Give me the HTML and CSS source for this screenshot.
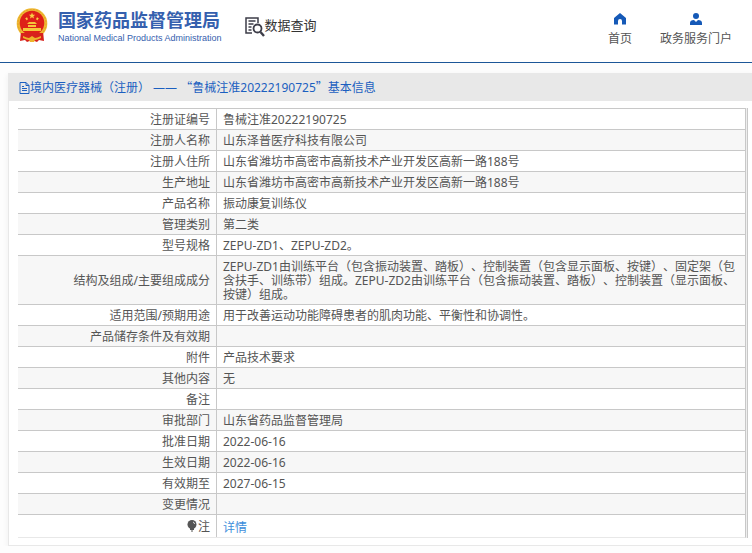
FILE: index.html
```html
<!DOCTYPE html>
<html lang="zh-CN">
<head>
<meta charset="utf-8">
<title>国家药品监督管理局 数据查询</title>
<link rel="stylesheet" href="styles.css">
</head>
<body>
<header class="site-header">
  <a class="brand" href="#">
    <svg class="emblem" viewBox="0 0 32 36" aria-hidden="true">
      <path d="M5 23 L4 33 L9 32 L11 34 L16 32 L21 34 L23 32 L28 33 L27 23Z" fill="#d8221c"/>
      <circle cx="16" cy="15.500" r="15.300" fill="#f0ba32"/>
      <circle cx="16" cy="15.500" r="14" fill="none" stroke="#e0a02a" stroke-width="1" stroke-dasharray="2 1.500"/>
      <circle cx="16" cy="15" r="12.300" fill="#de2018"/>
      <path d="M16 4.500l.9 2.200 2.300.1-1.800 1.500.6 2.300-2-1.300-2 1.300.6-2.300-1.800-1.500 2.300-.1z" fill="#f9d044"/>
      <path d="M10 9l.9 1 1.200-.3-.7 1.100.7 1.100-1.200-.3-.9 1v-1.300l-1.200-.5 1.200-.5zM22 9v1.300l1.200.5-1.200.5v1.300l-.9-1-1.200.3.7-1.100-.7-1.100 1.200.3z" fill="#f9d044"/>
      <path d="M11 16l2-2h6l2 2zM12 17h8v2h-8zM7 20h18v3H7z" fill="#f5c63a"/>
      <path d="M5 25h22v3q-11 5-22 0z" fill="#d8221c"/>
      <path d="M7 28q4 2 6 2l3-2 3 2q2 0 6-2v2q-4 2-6 2l-1 2h-4l-1-2q-2 0-6-2z" fill="#edb52b"/>
    </svg>
    <span class="brand-text">
      <span class="brand-cn">国家药品监督管理局</span>
      <span class="brand-en">National Medical Products Administration</span>
    </span>
  </a>
  <div class="section-name">
    <svg class="search-icon" viewBox="0 0 20 20" fill="none" stroke="#3d3d48" aria-hidden="true">
      <path d="M13 6V1H1v15h6" stroke-width="1.500"/>
      <path d="M3.500 4h7M3.500 7h5M3.500 10h3M3.500 13h3" stroke-width="1.300"/>
      <circle cx="12.500" cy="11.500" r="4" stroke-width="1.800"/>
      <path d="M15.500 15l3.500 4" stroke-width="2.400"/>
    </svg>
    <span>数据查询</span>
  </div>
  <nav class="site-nav">
    <a href="#">
      <svg viewBox="0 0 12 12" aria-hidden="true"><path d="M6 0L0 5v6.500h4V8q0-2 2-2t2 2v3.500h4V5z" fill="#1559b7"/></svg>
      <span>首页</span>
    </a>
    <a href="#">
      <svg viewBox="0 0 12 12" aria-hidden="true"><circle cx="6" cy="3" r="3" fill="#1559b7"/><path d="M0 12V10q0-3 4-3l2 2 2-2q4 0 4 3v2z" fill="#1559b7"/></svg>
      <span>政务服务门户</span>
    </a>
  </nav>
</header>
<main class="panel">
  <h1 class="panel-title">
    <svg viewBox="0 0 11 12" fill="none" stroke="#1b5fc0" aria-hidden="true"><path d="M1 .5h6l3 3v8H1zM7 .5v3h3M3 4.500h2M3 6.500h5M3 8.500h5"/></svg>
    <span>境内医疗器械（注册） —— <span class="quote">“</span>鲁械注准20222190725<span class="quote">”</span>基本信息</span>
  </h1>
  <div class="table-wrap">
    <table class="record">
      <tbody>
        <tr><th scope="row">注册证编号</th><td>鲁械注准20222190725</td></tr>
        <tr><th scope="row">注册人名称</th><td>山东泽普医疗科技有限公司</td></tr>
        <tr><th scope="row">注册人住所</th><td>山东省潍坊市高密市高新技术产业开发区高新一路188号</td></tr>
        <tr><th scope="row">生产地址</th><td>山东省潍坊市高密市高新技术产业开发区高新一路188号</td></tr>
        <tr><th scope="row">产品名称</th><td>振动康复训练仪</td></tr>
        <tr><th scope="row">管理类别</th><td>第二类</td></tr>
        <tr><th scope="row">型号规格</th><td>ZEPU-ZD1、ZEPU-ZD2。</td></tr>
        <tr><th scope="row">结构及组成/主要组成成分</th><td>ZEPU-ZD1由训练平台（包含振动装置、踏板）、控制装置（包含显示面板、按键）、固定架（包含扶手、训练带）组成。ZEPU-ZD2由训练平台（包含振动装置、踏板）、控制装置（显示面板、按键）组成。</td></tr>
        <tr><th scope="row">适用范围/预期用途</th><td>用于改善运动功能障碍患者的肌肉功能、平衡性和协调性。</td></tr>
        <tr><th scope="row">产品储存条件及有效期</th><td></td></tr>
        <tr><th scope="row">附件</th><td>产品技术要求</td></tr>
        <tr><th scope="row">其他内容</th><td>无</td></tr>
        <tr><th scope="row">备注</th><td></td></tr>
        <tr><th scope="row">审批部门</th><td>山东省药品监督管理局</td></tr>
        <tr><th scope="row">批准日期</th><td>2022-06-16</td></tr>
        <tr><th scope="row">生效日期</th><td>2022-06-16</td></tr>
        <tr><th scope="row">有效期至</th><td>2027-06-15</td></tr>
        <tr><th scope="row">变更情况</th><td></td></tr>
        <tr class="note"><th scope="row"><svg viewBox="0 0 10 12" aria-hidden="true"><circle cx="5" cy="4.500" r="4.500" fill="#555"/><path d="M3 8h4v2H3zM4 10.500h2v1H4z" fill="#555"/><path d="M6 2q1.500.5 1.500 2" fill="none" stroke="#ddd"/></svg>注</th><td><a href="#">详情</a></td></tr>
      </tbody>
    </table>
  </div>
</main>
</body>
</html>
```
FILE: styles.css
```css
* {
  box-sizing: border-box;
}

body {
  margin: 0;
  background: #fdfdfd;
  color: #555;
  font: 12px/14px "Noto Sans", "Noto Sans CJK SC", sans-serif;
  text-spacing-trim: space-all;
}

a {
  color: inherit;
  text-decoration: none;
}

.site-header {
  display: flex;
  align-items: flex-start;
  height: 63px;
  padding: 8px 20px 0 16px;
  background: #fff;
  border-bottom: 1px solid #1c5798;
}

.brand {
  display: flex;
  gap: 10px;
  color: #3560ae;
}

.emblem {
  width: 32px;
  height: 36px;
}

.brand-text {
  display: flex;
  flex-direction: column;
  white-space: nowrap;
}

.brand-cn {
  font-size: 18px;
  font-weight: 700;
  line-height: 24px;
}

.brand-en {
  font-family: "Liberation Sans", sans-serif;
  font-size: 9px;
  line-height: 13px;
}

.section-name {
  display: flex;
  align-items: center;
  margin: 7px 0 0 23px;
  color: #333;
  font-size: 13px;
  line-height: 20px;
}

.section-name span {
  padding-bottom: 2px;
}

.search-icon {
  width: 20px;
  height: 20px;
  margin-top: 2px;
}

.site-nav {
  display: flex;
  gap: 28px;
  margin-left: auto;
  padding-top: 5px;
  white-space: nowrap;
}

.site-nav a {
  display: flex;
  flex-direction: column;
  align-items: center;
  gap: 7px;
}

.site-nav svg {
  width: 12px;
  height: 12px;
}

.panel {
  margin: 10px 0 0 8px;
  background: #fff;
  border: 1px solid #e8e8e8;
  border-width: 0 0 1px 1px;
  box-shadow: 0 2px 6px #eee;
}

.panel-title {
  display: flex;
  align-items: center;
  height: 28px;
  margin: 0;
  padding: 1px 0 0 10px;
  background: #e8e8e8;
  color: #1b5fc0;
  font-size: 12px;
  font-weight: 400;
}

.panel-title svg {
  width: 11px;
  height: 12px;
}

.quote {
  font-family: "Noto Sans CJK SC", sans-serif;
}

.table-wrap {
  margin: 7px 4px 7px 9px;
  border-right: 1px solid #c8c8c8;
  padding-right: 1px;
  background: #eee;
}

.record {
  width: 100%;
  border-collapse: separate;
  border-spacing: 0;
  border-right: 1px solid #c8c8c8;
  border-bottom: 1px solid #e8e8e8;
  background: #fff;
}

.record th,
.record td {
  height: 21px;
  padding: 4px 6px 2px;
  border-top: 1px solid #c8c8c8;
}

.record th {
  width: 199px;
  border-right: 1px solid #c8c8c8;
  font-weight: 400;
  text-align: right;
}

.record tr:nth-child(even) {
  background: #f7f7f7;
}

.record .note > * {
  height: 23px;
}

.record .note td {
  padding-top: 6px;
}

.record svg {
  width: 10px;
  height: 12px;
  margin-right: 1px;
  vertical-align: -1px;
}

.record a {
  color: #3d8edb;
}
```
